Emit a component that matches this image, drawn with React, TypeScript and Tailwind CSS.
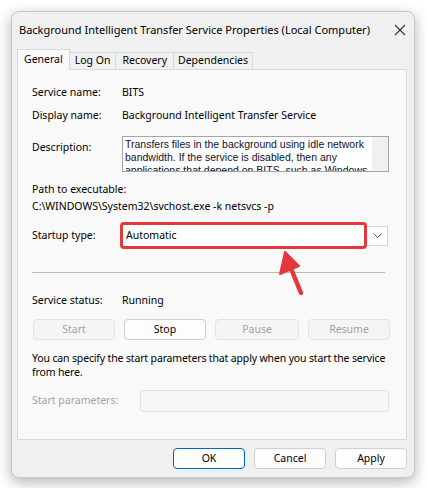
import React from "react";

const ui = { fontFamily: '"Noto Sans", "Open Sans", sans-serif' };
const classic = { fontFamily: '"Liberation Sans", Arial, sans-serif' };

function Btn({ label, disabled, primary, w = "w-[82px]" }: any) {
  return (
    <div
      className={`${w} h-[21px] flex items-center justify-center rounded-[4px] border text-[10.5px] ${
        primary
          ? "border-[#0067c0] bg-[#fdfdfd] text-black"
          : disabled
          ? "border-[#e3e3e3] bg-[#f5f5f5] text-[#a2a2a2]"
          : "border-[#cfcfcf] bg-[#fdfdfd] text-black"
      }`}
    >
      {label}
    </div>
  );
}

function Row({ label, children, className = "" }: any) {
  return (
    <div className={`flex items-center h-[16px] ${className}`}>
      <div className="w-[90px] shrink-0">{label}</div>
      <div>{children}</div>
    </div>
  );
}

export default function App() {
  return (
    <div className="relative w-[426px] h-[488px] bg-white pt-[11px] pl-[11px] overflow-hidden" style={ui}>
      <div className="w-[404px] h-[467px] rounded-[8px] bg-[#f0f0f0] border border-[#c8c8c8] shadow-[0_4px_14px_rgba(0,0,0,0.3)] flex flex-col text-[10.5px] text-black">
        {/* title bar */}
        <div className="h-[36px] flex items-center justify-between pl-[7px] pr-[8px] shrink-0">
          <span className="text-[11px] whitespace-nowrap">Background Intelligent Transfer Service Properties (Local Computer)</span>
          <svg width="12" height="12" viewBox="0 0 12 12">
            <path d="M1 1L11 11M11 1L1 11" stroke="#333" strokeWidth="1.1" />
          </svg>
        </div>

        {/* tabs */}
        <div className="flex items-end h-[21px] pl-[5px] shrink-0">
          <div className="h-[21px] px-[6px] flex items-center bg-[#f9f9f9] border border-b-0 border-[#d9d9d9] relative top-[1px] z-10">
            General
          </div>
          <div className="h-[17px] px-[5px] flex items-center border border-l-0 border-b-0 border-[#d9d9d9]">Log On</div>
          <div className="h-[17px] px-[6px] flex items-center border border-l-0 border-b-0 border-[#d9d9d9]">Recovery</div>
          <div className="h-[17px] px-[4px] flex items-center border border-l-0 border-b-0 border-[#d9d9d9]">Dependencies</div>
        </div>

        {/* panel */}
        <div className="ml-[5px] w-[390px] h-[371px] border border-[#d9d9d9] bg-[#f9f9f9] px-[14px] flex flex-col shrink-0">
          <Row label="Service name:" className="mt-[15px]">BITS</Row>
          <Row label="Display name:" className="mt-[7px]">Background Intelligent Transfer Service</Row>

          <div className="flex mt-[12px]">
            <div className="w-[90px] shrink-0 pt-[4px]">Description:</div>
            <div className="w-[267px] h-[36px] border border-[#a5a5a5] bg-white flex overflow-hidden">
              <div className="flex-1 pl-[2px] pt-[1px] text-[10.5px] leading-[13px] text-[#101030] overflow-hidden" style={classic}>
                Transfers files in the background using idle network bandwidth. If the service is disabled, then any
                applications that depend on BITS, such as Windows Update or MSN Explorer, will be unable to
              </div>
              <div className="w-[16px] shrink-0 bg-[#f0f0f0]" />
            </div>
          </div>

          <div className="h-[16px] flex items-center mt-[10px]">Path to executable:</div>
          <div className="h-[16px] flex items-center mt-[1px]">C:\WINDOWS\System32\svchost.exe -k netsvcs -p</div>

          <div className="flex items-center mt-[7px] h-[27px]">
            <div className="w-[88px] shrink-0">Startup type:</div>
            <div className="w-[247px] h-[27px] rounded-[4px] border-[3px] border-[#e5383d] bg-white flex items-center pl-[3px]">
              Automatic
            </div>
            <div className="w-[21px] h-[20px] border border-l-0 border-[#d5d5d5] bg-white flex items-center justify-center">
              <svg width="9" height="6" viewBox="0 0 9 6">
                <path d="M0.5 0.5L4.5 4.5L8.5 0.5" fill="none" stroke="#555" strokeWidth="1" />
              </svg>
            </div>
          </div>

          <div className="mt-[23px] w-[353px] h-px bg-[#b9b9b9]" />

          <Row label="Service status:" className="mt-[20px]">Running</Row>

          <div className="flex gap-[9px] mt-[10px] pl-[1px]">
            <Btn label="Start" disabled />
            <Btn label="Stop" />
            <Btn label="Pause" disabled w="w-[84px]" />
            <Btn label="Resume" disabled />
          </div>

          <div className="mt-[11px] leading-[14px] w-[362px] tracking-[-0.15px]">
            You can specify the start parameters that apply when you start the service from here.
          </div>

          <div className="flex items-center mt-[11px]">
            <div className="w-[108px] shrink-0 text-[#a2a2a2]">Start parameters:</div>
            <div className="w-[249px] h-[22px] border border-[#e3e3e3] bg-[#f7f7f7] rounded-[3px]" />
          </div>
        </div>

        {/* bottom buttons */}
        <div className="flex justify-end gap-[9px] pr-[7px] mt-[8px]">
          <Btn label="OK" primary w="w-[72px]" />
          <Btn label="Cancel" w="w-[72px]" />
          <Btn label="Apply" w="w-[72px]" />
        </div>
      </div>

      {/* annotation arrow */}
      <svg className="absolute left-[270px] top-[246px]" width="40" height="52" viewBox="0 0 40 52">
        <path d="M31 47L20 20" stroke="#e5383d" strokeWidth="4.5" strokeLinecap="round" />
        <path d="M15 6L10 28L29 20Z" fill="#e5383d" stroke="#e5383d" strokeWidth="2" strokeLinejoin="round" />
      </svg>
    </div>
  );
}
